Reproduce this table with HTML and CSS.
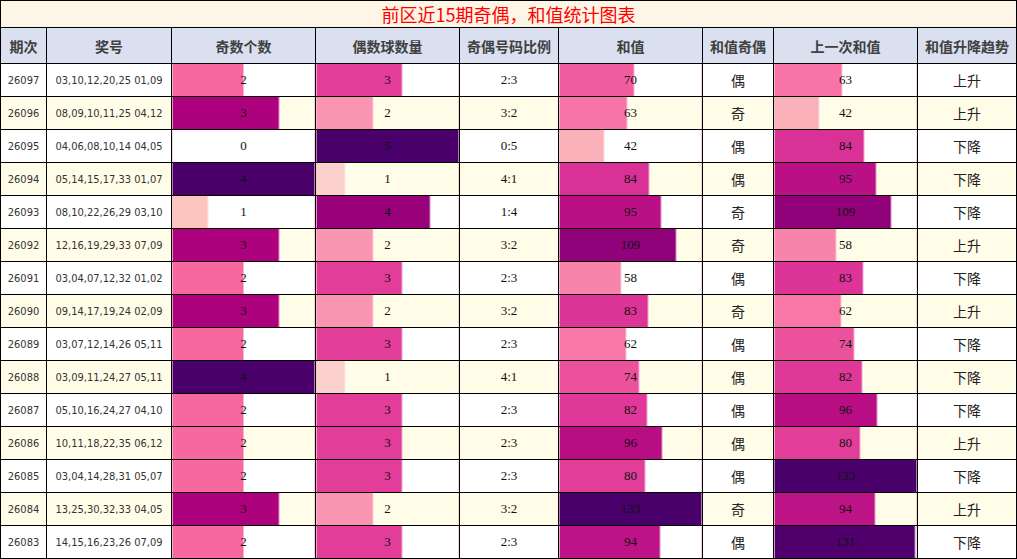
FILE: index.html
```html
<!DOCTYPE html>
<html lang="zh-CN">
<head>
<meta charset="utf-8">
<title>前区近15期奇偶，和值统计图表</title>
<link rel="stylesheet" href="styles.css">
</head>
<body>
<table class="stats">
  <colgroup>
    <col class="c-issue"><col class="c-nums"><col class="c-bar"><col class="c-bar"><col class="c-ratio"><col class="c-bar"><col class="c-parity"><col class="c-bar"><col class="c-trend">
  </colgroup>
  <thead>
    <tr class="title-row"><th colspan="9" class="title">前区近15期奇偶，和值统计图表</th></tr>
    <tr class="head-row">
      <th>期次</th><th>奖号</th><th>奇数个数</th><th>偶数球数量</th><th>奇偶号码比例</th><th>和值</th><th>和值奇偶</th><th>上一次和值</th><th>和值升降趋势</th>
    </tr>
  </thead>
  <tbody>
    <tr>
      <td class="issue">26097</td><td class="nums">03,10,12,20,25 01,09</td>
      <td class="bar" style="--w:50%;--c:#f768a1">2</td>
      <td class="bar" style="--w:60%;--c:#e23e99">3</td>
      <td class="num">2:3</td>
      <td class="bar" style="--w:52.63%;--c:#f15d9f">70</td>
      <td class="cjk">偶</td>
      <td class="bar" style="--w:47.37%;--c:#f874a6">63</td>
      <td class="cjk">上升</td>
    </tr>
    <tr>
      <td class="issue">26096</td><td class="nums">08,09,10,11,25 04,12</td>
      <td class="bar" style="--w:75%;--c:#ae017e">3</td>
      <td class="bar" style="--w:40%;--c:#f994b1">2</td>
      <td class="num">3:2</td>
      <td class="bar" style="--w:47.37%;--c:#f874a6">63</td>
      <td class="cjk">奇</td>
      <td class="bar" style="--w:31.58%;--c:#fbb1ba">42</td>
      <td class="cjk">上升</td>
    </tr>
    <tr>
      <td class="issue">26095</td><td class="nums">04,06,08,10,14 04,05</td>
      <td class="bar" style="--w:0%;--c:#fff7f3">0</td>
      <td class="bar" style="--w:100%;--c:#49006a">5</td>
      <td class="num">0:5</td>
      <td class="bar" style="--w:31.58%;--c:#fbb1ba">42</td>
      <td class="cjk">偶</td>
      <td class="bar" style="--w:63.16%;--c:#da3196">84</td>
      <td class="cjk">下降</td>
    </tr>
    <tr>
      <td class="issue">26094</td><td class="nums">05,14,15,17,33 01,07</td>
      <td class="bar" style="--w:100%;--c:#49006a">4</td>
      <td class="bar" style="--w:20%;--c:#fcd0cc">1</td>
      <td class="num">4:1</td>
      <td class="bar" style="--w:63.16%;--c:#da3196">84</td>
      <td class="cjk">偶</td>
      <td class="bar" style="--w:71.43%;--c:#bb1085">95</td>
      <td class="cjk">下降</td>
    </tr>
    <tr>
      <td class="issue">26093</td><td class="nums">08,10,22,26,29 03,10</td>
      <td class="bar" style="--w:25%;--c:#fcc5c0">1</td>
      <td class="bar" style="--w:80%;--c:#99017b">4</td>
      <td class="num">1:4</td>
      <td class="bar" style="--w:71.43%;--c:#bb1085">95</td>
      <td class="cjk">奇</td>
      <td class="bar" style="--w:81.95%;--c:#91017a">109</td>
      <td class="cjk">下降</td>
    </tr>
    <tr>
      <td class="issue">26092</td><td class="nums">12,16,19,29,33 07,09</td>
      <td class="bar" style="--w:75%;--c:#ae017e">3</td>
      <td class="bar" style="--w:40%;--c:#f994b1">2</td>
      <td class="num">3:2</td>
      <td class="bar" style="--w:81.95%;--c:#91017a">109</td>
      <td class="cjk">奇</td>
      <td class="bar" style="--w:43.61%;--c:#f884ab">58</td>
      <td class="cjk">上升</td>
    </tr>
    <tr>
      <td class="issue">26091</td><td class="nums">03,04,07,12,32 01,02</td>
      <td class="bar" style="--w:50%;--c:#f768a1">2</td>
      <td class="bar" style="--w:60%;--c:#e23e99">3</td>
      <td class="num">2:3</td>
      <td class="bar" style="--w:43.61%;--c:#f884ab">58</td>
      <td class="cjk">偶</td>
      <td class="bar" style="--w:62.41%;--c:#dd3497">83</td>
      <td class="cjk">下降</td>
    </tr>
    <tr>
      <td class="issue">26090</td><td class="nums">09,14,17,19,24 02,09</td>
      <td class="bar" style="--w:75%;--c:#ae017e">3</td>
      <td class="bar" style="--w:40%;--c:#f994b1">2</td>
      <td class="num">3:2</td>
      <td class="bar" style="--w:62.41%;--c:#dd3497">83</td>
      <td class="cjk">奇</td>
      <td class="bar" style="--w:46.62%;--c:#f877a6">62</td>
      <td class="cjk">上升</td>
    </tr>
    <tr>
      <td class="issue">26089</td><td class="nums">03,07,12,14,26 05,11</td>
      <td class="bar" style="--w:50%;--c:#f768a1">2</td>
      <td class="bar" style="--w:60%;--c:#e23e99">3</td>
      <td class="num">2:3</td>
      <td class="bar" style="--w:46.62%;--c:#f877a6">62</td>
      <td class="cjk">偶</td>
      <td class="bar" style="--w:55.64%;--c:#eb519c">74</td>
      <td class="cjk">下降</td>
    </tr>
    <tr>
      <td class="issue">26088</td><td class="nums">03,09,11,24,27 05,11</td>
      <td class="bar" style="--w:100%;--c:#49006a">4</td>
      <td class="bar" style="--w:20%;--c:#fcd0cc">1</td>
      <td class="num">4:1</td>
      <td class="bar" style="--w:55.64%;--c:#eb519c">74</td>
      <td class="cjk">偶</td>
      <td class="bar" style="--w:61.65%;--c:#df3898">82</td>
      <td class="cjk">下降</td>
    </tr>
    <tr>
      <td class="issue">26087</td><td class="nums">05,10,16,24,27 04,10</td>
      <td class="bar" style="--w:50%;--c:#f768a1">2</td>
      <td class="bar" style="--w:60%;--c:#e23e99">3</td>
      <td class="num">2:3</td>
      <td class="bar" style="--w:61.65%;--c:#df3898">82</td>
      <td class="cjk">偶</td>
      <td class="bar" style="--w:72.18%;--c:#b90d84">96</td>
      <td class="cjk">下降</td>
    </tr>
    <tr>
      <td class="issue">26086</td><td class="nums">10,11,18,22,35 06,12</td>
      <td class="bar" style="--w:50%;--c:#f768a1">2</td>
      <td class="bar" style="--w:60%;--c:#e23e99">3</td>
      <td class="num">2:3</td>
      <td class="bar" style="--w:72.18%;--c:#b90d84">96</td>
      <td class="cjk">偶</td>
      <td class="bar" style="--w:60.15%;--c:#e23e99">80</td>
      <td class="cjk">上升</td>
    </tr>
    <tr>
      <td class="issue">26085</td><td class="nums">03,04,14,28,31 05,07</td>
      <td class="bar" style="--w:50%;--c:#f768a1">2</td>
      <td class="bar" style="--w:60%;--c:#e23e99">3</td>
      <td class="num">2:3</td>
      <td class="bar" style="--w:60.15%;--c:#e23e99">80</td>
      <td class="cjk">偶</td>
      <td class="bar" style="--w:100%;--c:#49006a">133</td>
      <td class="cjk">下降</td>
    </tr>
    <tr>
      <td class="issue">26084</td><td class="nums">13,25,30,32,33 04,05</td>
      <td class="bar" style="--w:75%;--c:#ae017e">3</td>
      <td class="bar" style="--w:40%;--c:#f994b1">2</td>
      <td class="num">3:2</td>
      <td class="bar" style="--w:100%;--c:#49006a">133</td>
      <td class="cjk">奇</td>
      <td class="bar" style="--w:70.68%;--c:#be1387">94</td>
      <td class="cjk">上升</td>
    </tr>
    <tr>
      <td class="issue">26083</td><td class="nums">14,15,16,23,26 07,09</td>
      <td class="bar" style="--w:50%;--c:#f768a1">2</td>
      <td class="bar" style="--w:60%;--c:#e23e99">3</td>
      <td class="num">2:3</td>
      <td class="bar" style="--w:70.68%;--c:#be1387">94</td>
      <td class="cjk">偶</td>
      <td class="bar" style="--w:98.5%;--c:#4f006c">131</td>
      <td class="cjk">下降</td>
    </tr>
  </tbody>
</table>
</body>
</html>
```
FILE: styles.css
```css
html, body {
  margin: 0;
  padding: 0;
  background: #ffffff;
  overflow: hidden;
}

.stats {
  border-collapse: collapse;
  table-layout: fixed;
  width: 1017px;
  border: 1px solid #000;
}

.c-issue { width: 46px; }
.c-nums { width: 125px; }
.c-bar { width: 144px; }
.c-ratio { width: 99px; }
.c-parity { width: 71px; }
.c-trend { width: 99px; }

.stats th,
.stats td {
  border: 1px solid #000;
  padding: 0;
  text-align: center;
  vertical-align: middle;
  white-space: nowrap;
  overflow: hidden;
}

.title-row th {
  height: 26px;
  background: #fdf5e6;
  color: #f00;
  font-family: "Noto Sans CJK SC", "Noto Sans", sans-serif;
  font-weight: normal;
  font-size: 18px;
  line-height: 26px;
}

.head-row th {
  height: 35px;
  background: #dbe0f0;
  color: #404040;
  font-family: "Noto Sans CJK SC", "Noto Sans", sans-serif;
  font-weight: bold;
  font-size: 14px;
}

.stats tbody td {
  height: 32px;
  color: #111;
}

.stats tbody tr:nth-child(even) {
  background: #fffde8;
}

.issue,
.nums {
  font-family: "DejaVu Sans Condensed", "DejaVu Sans", sans-serif;
  font-size: 11px;
  color: #333 !important;
}

.num,
.bar {
  font-family: "Liberation Serif", serif;
  font-size: 13px;
}

.cjk {
  font-family: "Noto Sans CJK SC", "Noto Sans", sans-serif;
  font-size: 14px;
  color: #222 !important;
}

.bar {
  background:
    linear-gradient(to left, #f1a9c9 0 1px, transparent 1px),
    linear-gradient(to right,
      var(--c) 0 calc(var(--w) - 1px),
      color-mix(in srgb, var(--c) 45%, #fff) calc(var(--w) - 1px) var(--w),
      transparent var(--w));
}
```
